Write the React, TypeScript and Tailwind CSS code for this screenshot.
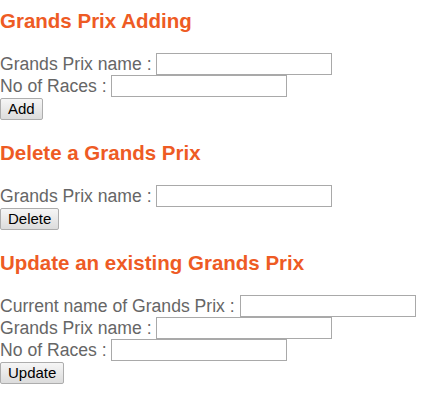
const labelCls = "text-[17.6px] leading-[22px] text-[#666666]";
const inputCls = "h-[22px] w-[176px] border border-[#a9a9a9] bg-white align-top outline-none";
const buttonCls =
  "h-[22px] rounded-[2px] border border-[#adadad] bg-gradient-to-b from-[#f6f6f6] to-[#dcdcdc] px-[7px] text-[15px] leading-[18px] text-black";

const Field = ({ label }: { label: string }) => (
  <div className={labelCls}>
    <span>{label}</span>
    <span>&nbsp;</span>
    <input type="text" className={inputCls} />
  </div>
);

const Section = ({ title, children, btn }: { title: string; children: React.ReactNode; btn: string }) => (
  <section className="mb-[22px]">
    <h3 className="mb-5 h-6 text-[20.5px] font-bold leading-6 text-[#ee5b24]">{title}</h3>
    <form className="flex flex-col" onSubmit={(e) => e.preventDefault()}>
      {children}
      <div className="h-[22px]">
        <button type="submit" className={buttonCls}>
          {btn}
        </button>
      </div>
    </form>
  </section>
);

export default function App() {
  return (
    <div className="min-h-[413px] bg-white pt-[9px] font-['Liberation_Sans',Arial,sans-serif]">
      <Section title="Grands Prix Adding" btn="Add">
        <Field label="Grands Prix name :" />
        <Field label="No of Races :" />
      </Section>
      <Section title="Delete a Grands Prix" btn="Delete">
        <Field label="Grands Prix name :" />
      </Section>
      <Section title="Update an existing Grands Prix" btn="Update">
        <Field label="Current name of Grands Prix :" />
        <Field label="Grands Prix name :" />
        <Field label="No of Races :" />
      </Section>
    </div>
  );
}
